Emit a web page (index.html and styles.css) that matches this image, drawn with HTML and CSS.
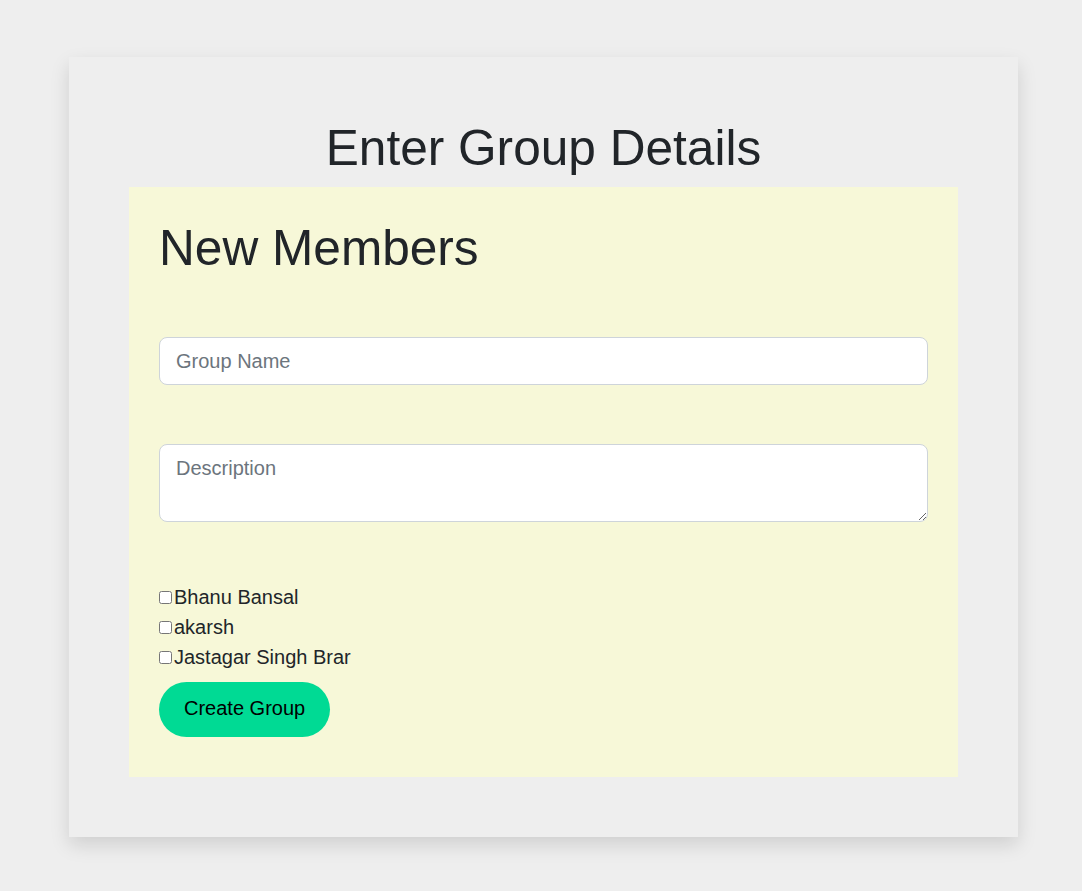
FILE: index.html
```html
<!DOCTYPE html>
<html lang="en">
<head>
<meta charset="utf-8">
<title>Enter Group Details</title>
<link rel="stylesheet" href="styles.css">
</head>
<body>
  <main class="card">
    <h1 class="title">Enter Group Details</h1>
    <form class="panel">
      <h1 class="panel-title">New Members</h1>
      <input class="field field-name" type="text" placeholder="Group Name">
      <textarea class="field field-desc" rows="2" placeholder="Description"></textarea>
      <div class="members">
        <label class="member"><input type="checkbox" class="check">Bhanu Bansal</label>
        <label class="member"><input type="checkbox" class="check">akarsh</label>
        <label class="member"><input type="checkbox" class="check">Jastagar Singh Brar</label>
      </div>
      <button type="button" class="create">Create Group</button>
    </form>
  </main>
</body>
</html>
```

FILE: styles.css
```css
* {
  box-sizing: border-box;
}

html, body {
  margin: 0;
  padding: 0;
  background: #eeeeee;
}

body {
  font-family: "Liberation Sans", Arial, sans-serif;
  color: #212529;
  font-size: 20px;
  line-height: 1.5;
  padding: 57px 0 54px 69px;
}

.card {
  display: block;
  width: 949px;
  background: #eeeeee;
  padding: 62px 60px 60px;
  box-shadow: 0 8px 18px rgba(0, 0, 0, 0.13);
}

.title {
  margin: 0 0 8.5px;
  font-size: 49.6px;
  font-weight: 400;
  line-height: 1.2;
  text-align: center;
}

.panel {
  display: flex;
  flex-direction: column;
  align-items: flex-start;
  background: #f7f8d8;
  padding: 32px 30px 40px;
}

.panel-title {
  margin: 0;
  font-size: 49.6px;
  font-weight: 400;
  line-height: 1.2;
}

.field {
  display: block;
  width: 100%;
  font-family: inherit;
  font-size: 20px;
  line-height: 1.5;
  color: #212529;
  background: #ffffff;
  border: 1px solid #ced4da;
  border-radius: 8px;
  padding: 8px 16px;
  outline: none;
}

.field::placeholder {
  color: #6c757d;
  opacity: 1;
}

.field-name {
  margin-top: 58.5px;
  height: 48px;
}

.field-desc {
  margin-top: 59px;
  height: 78px;
  resize: vertical;
}

.members {
  margin-top: 60px;
  display: flex;
  flex-direction: column;
}

.member {
  display: block;
  line-height: 30px;
}

.check {
  margin: 0 2px 5px 0;
  width: 13px;
  height: 13px;
  vertical-align: baseline;
}

.create {
  margin-top: 10px;
  height: 55px;
  padding: 0 25px 3px;
  border: none;
  border-radius: 28px;
  background: #00da94;
  color: #000000;
  font-family: inherit;
  font-size: 20px;
  line-height: 1.5;
  cursor: pointer;
}
```
